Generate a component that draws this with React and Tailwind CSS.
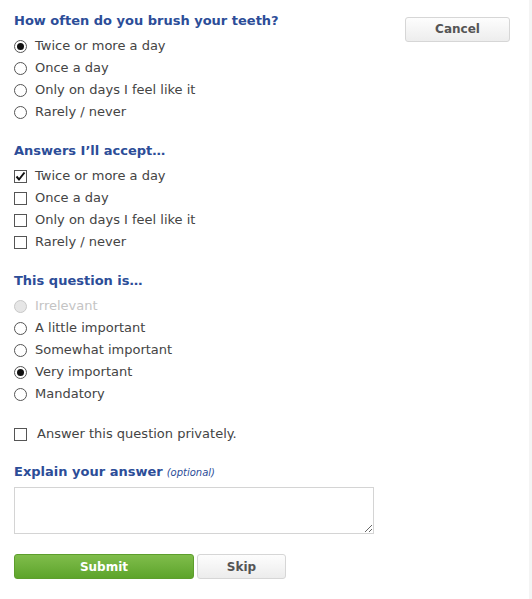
import { useState } from 'react';

const font = { fontFamily: '"DejaVu Sans", Verdana, sans-serif' };

function Radio({ checked, disabled, label, onClick }) {
  return (
    <div onClick={disabled ? undefined : onClick} className="flex items-center h-[22px] cursor-default">
      <span
        className={`w-[13px] h-[13px] rounded-full border flex items-center justify-center shrink-0 ${disabled ? 'border-[#c8c8c8] bg-[#e6e6e6]' : 'border-[#555] bg-white'}`}
      >
        {checked && <span className="w-[7px] h-[7px] rounded-full bg-[#111]" />}
      </span>
      <span className={`ml-[8px] text-[13px] ${disabled ? 'text-[#c4c4c4]' : 'text-[#444]'}`}>{label}</span>
    </div>
  );
}

function Check({ checked, label, onClick, gap = 'ml-[8px]' }) {
  return (
    <div onClick={onClick} className="flex items-center h-[22px] cursor-default">
      <span className="w-[13px] h-[13px] border border-[#555] bg-white flex items-center justify-center shrink-0">
        {checked && (
          <svg width="11" height="11" viewBox="0 0 11 11">
            <path d="M1.5 5.5 L4 8.5 L9.5 1.5" fill="none" stroke="#111" strokeWidth="2" />
          </svg>
        )}
      </span>
      <span className={`${gap} text-[13px] text-[#444]`}>{label}</span>
    </div>
  );
}

export default function App() {
  const options = ['Twice or more a day', 'Once a day', 'Only on days I feel like it', 'Rarely / never'];
  const importance = ['Irrelevant', 'A little important', 'Somewhat important', 'Very important', 'Mandatory'];
  const [answer, setAnswer] = useState(0);
  const [accept, setAccept] = useState([true, false, false, false]);
  const [imp, setImp] = useState(3);
  const [priv, setPriv] = useState(false);

  return (
    <div style={font} className="relative w-[532px] h-[599px] bg-white overflow-hidden flex">
      <div className="flex-1 pl-[14px] pr-[19px] pt-[11px] flex">
        <div className="w-[360px] flex flex-col">
          <h2 className="text-[13px] font-bold text-[#2c4d98] h-[20px] leading-[20px]">How often do you brush your teeth?</h2>
          <div className="mt-[4px]">
            {options.map((o, i) => (
              <Radio key={o} label={o} checked={answer === i} onClick={() => setAnswer(i)} />
            ))}
          </div>

          <h2 className="mt-[18px] text-[13px] font-bold text-[#2c4d98] h-[20px] leading-[20px]">Answers I’ll accept…</h2>
          <div className="mt-[4px]">
            {options.map((o, i) => (
              <Check
                key={o}
                label={o}
                checked={accept[i]}
                onClick={() => setAccept(accept.map((v, j) => (j === i ? !v : v)))}
              />
            ))}
          </div>

          <h2 className="mt-[18px] text-[13px] font-bold text-[#2c4d98] h-[20px] leading-[20px]">This question is…</h2>
          <div className="mt-[4px]">
            {importance.map((o, i) => (
              <Radio key={o} label={o} disabled={i === 0} checked={imp === i} onClick={() => setImp(i)} />
            ))}
          </div>

          <div className="mt-[18px]">
            <Check label="Answer this question privately." checked={priv} gap="ml-[10px]" onClick={() => setPriv(!priv)} />
          </div>

          <div className="mt-[17px] h-[20px] leading-[20px] flex items-baseline">
            <span className="text-[13px] font-bold text-[#2c4d98]">Explain your answer</span>
            <span className="ml-[4px] text-[10px] italic text-[#2c4d98]">(optional)</span>
          </div>
          <textarea className="mt-[5px] w-[360px] h-[47px] border border-[#d4d4d4] bg-white outline-none" />

          <div className="mt-[20px] flex gap-[3px]">
            <button className="w-[180px] h-[25px] rounded-[3px] border border-[#5d9e2c] bg-gradient-to-b from-[#80bd4b] to-[#5da42a] text-white text-[12px] font-bold">
              Submit
            </button>
            <button className="w-[89px] h-[25px] rounded-[3px] border border-[#d6d6d6] bg-gradient-to-b from-[#fdfdfd] to-[#ececec] text-[#555] text-[12px] font-bold">
              Skip
            </button>
          </div>
        </div>
        <div className="ml-auto pt-[5px]">
          <button className="w-[105px] h-[25px] rounded-[3px] border border-[#d6d6d6] bg-gradient-to-b from-[#fdfdfd] to-[#ededed] text-[#555] text-[12px] font-bold">
            Cancel
          </button>
        </div>
      </div>
      <div className="w-[3px] bg-[#f4f4f4]" />
    </div>
  );
}
